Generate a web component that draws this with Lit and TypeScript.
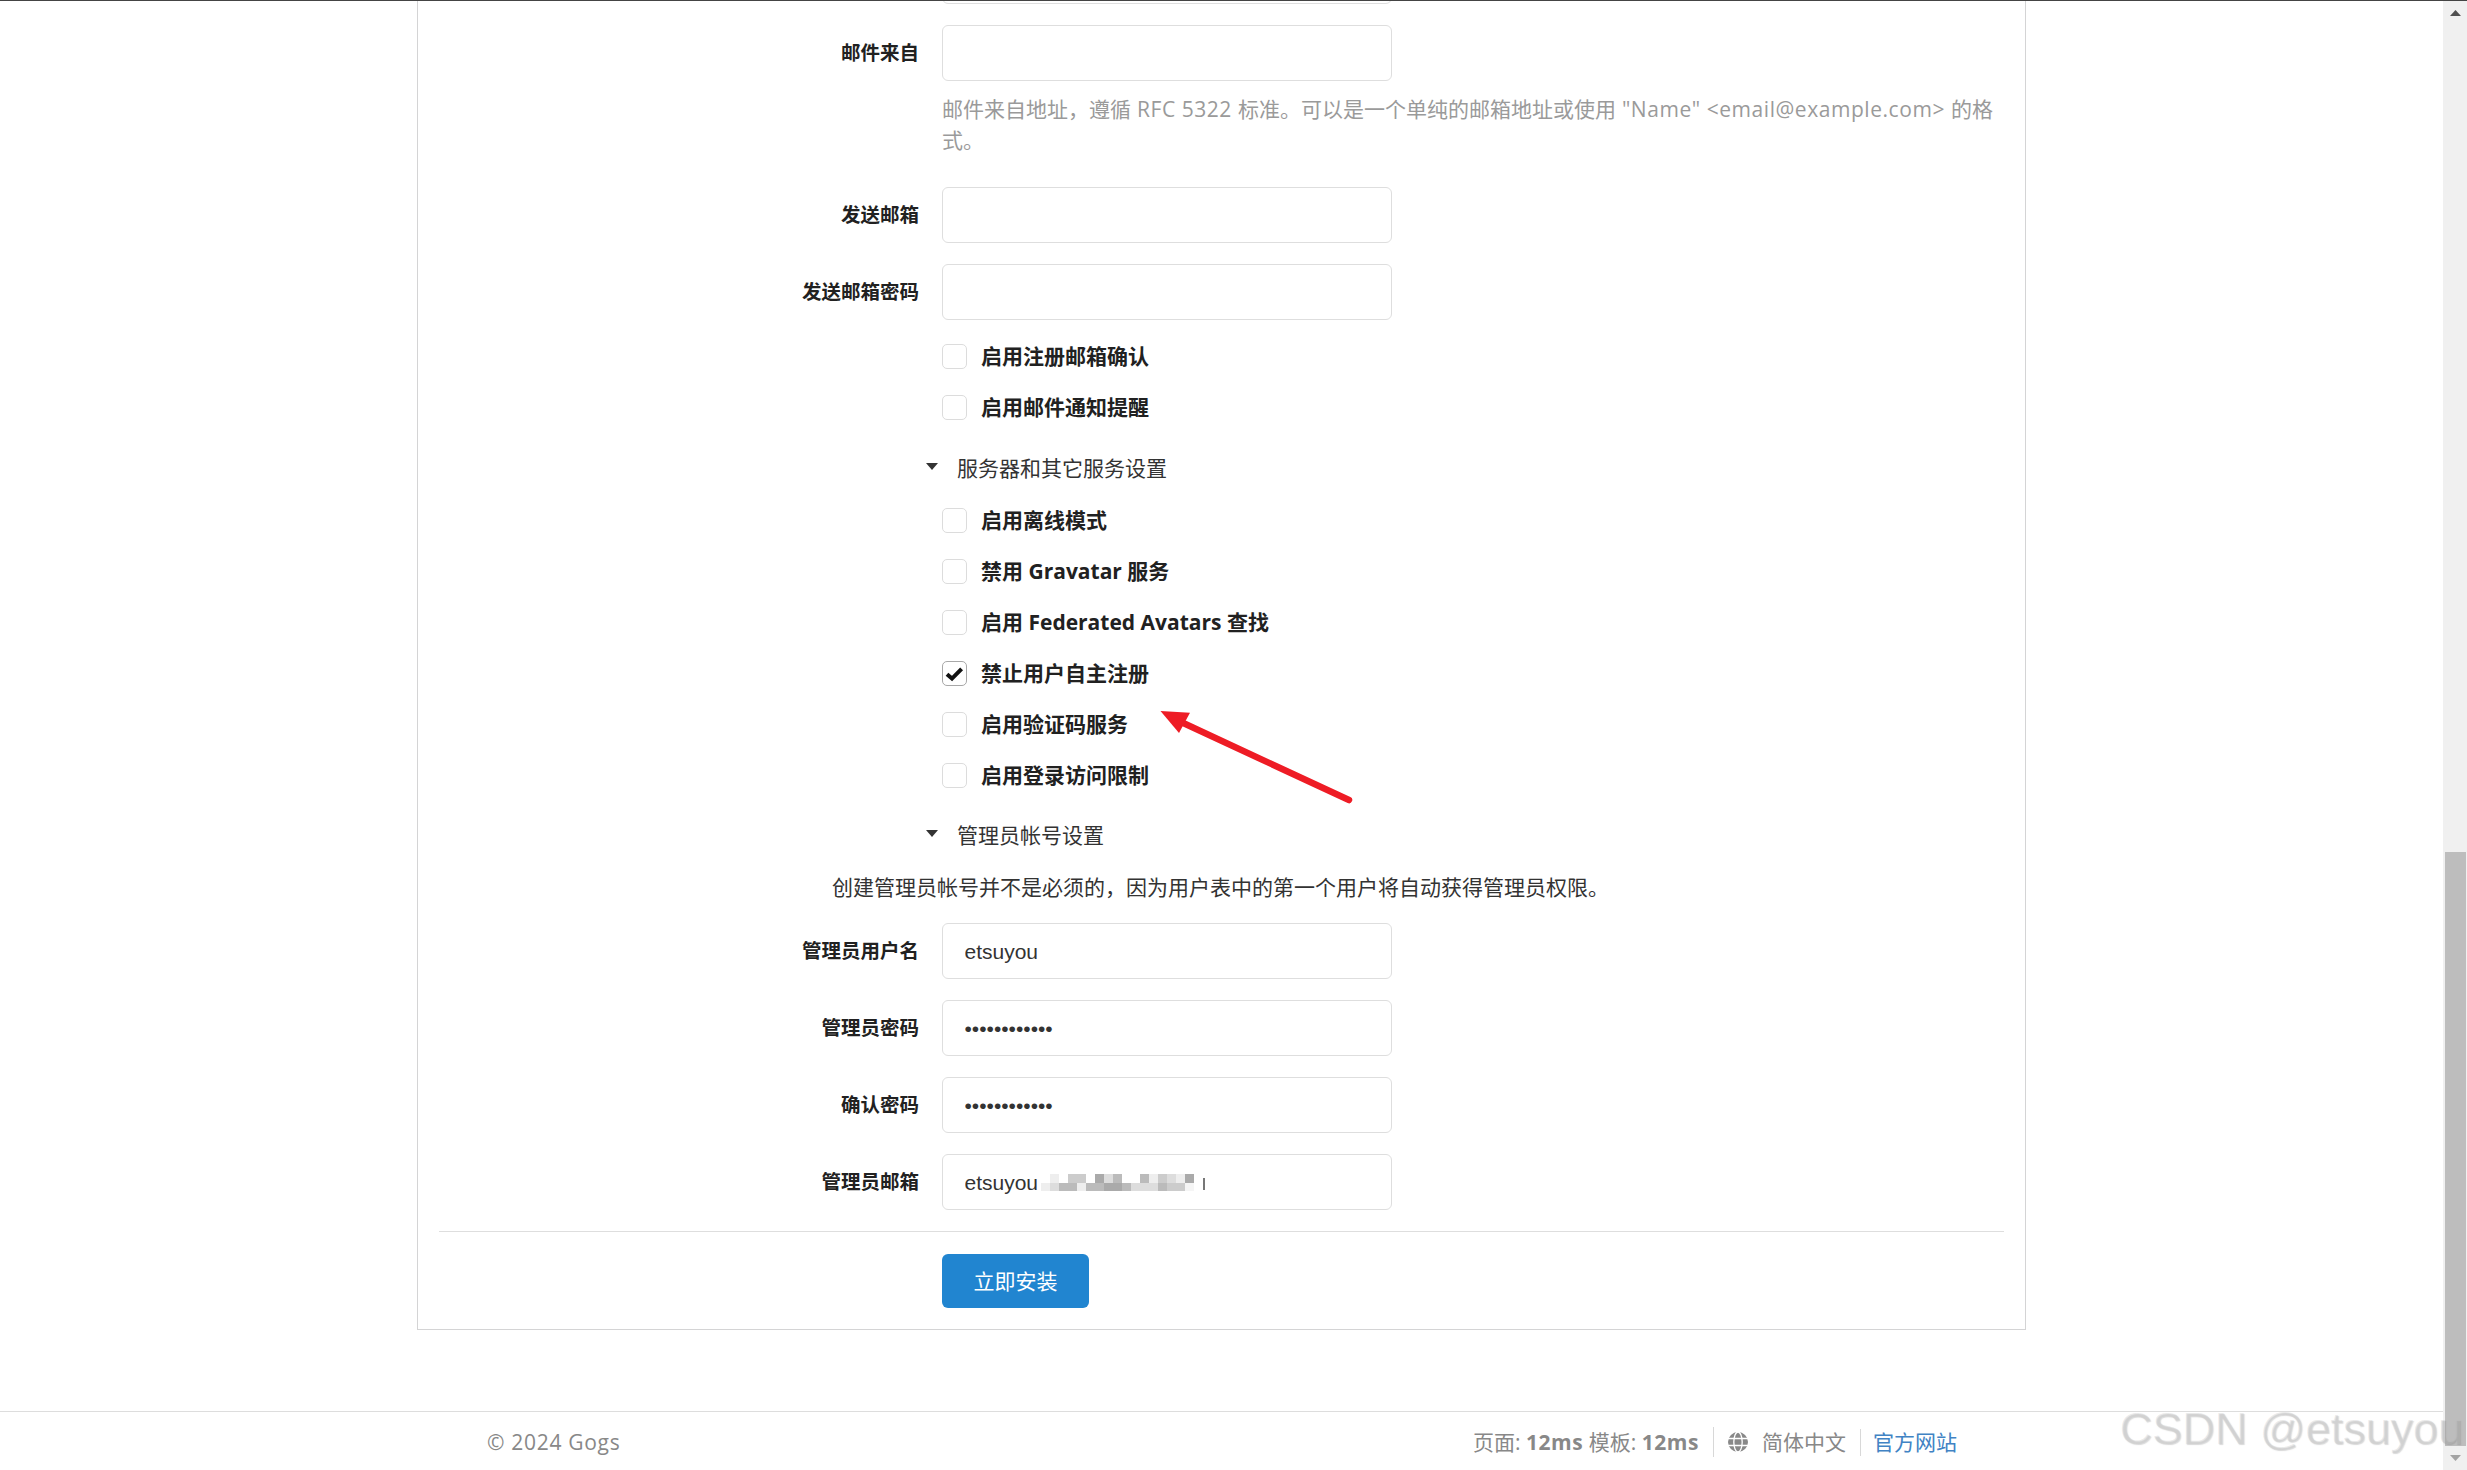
import { LitElement, html, css, svg } from "lit";
import { customElement } from "lit/decorators.js";

const MOSAIC: string[][] = [
  ["#fff","#eee","#fff","#ccc","#ccc","#fff","#aaa","#ddd","#bbb","#fff","#fff","#bbb","#eee","#ccc","#ddd","#eee","#aaa"],
  ["#eee","#ddd","#bbb","#bbb","#eee","#bbb","#bbb","#aaa","#aaa","#bbb","#ddd","#ddd","#ddd","#bbb","#ccc","#ccc","#f5f5f5"],
];

@customElement("app-root")
export class AppRoot extends LitElement {
  static styles = css`
    :host {
      display: block;
      position: relative;
      width: 2467px;
      height: 1470px;
      overflow: hidden;
      background: #fff;
      color: #212121;
      font-family: "Open Sans", "Noto Sans CJK SC", sans-serif;
      font-size: 21px;
      line-height: 30px;
    }
    .lt { letter-spacing: 0.55px; }
    .copy { letter-spacing: 0.7px; }
    .topline { height: 1px; background: #444; }
    .shell { display: flex; height: 1469px; }
    .main {
      flex: 1;
      min-width: 0;
      display: flex;
      flex-direction: column;
      justify-content: flex-end;
      overflow: hidden;
    }
    .card {
      flex: none;
      box-sizing: border-box;
      width: 1609px;
      margin: 0 0 81px 417px;
      padding: 0 21px 21px 21px;
      border: 1px solid #d4d4d5;
      border-top: none;
    }
    .field {
      display: grid;
      grid-template-columns: 480px 450px;
      column-gap: 23px;
      align-items: center;
      margin-top: 21px;
    }
    .field label {
      text-align: right;
      font-size: 19.5px;
      font-weight: 700;
      color: #212121;
    }
    .field input {
      box-sizing: border-box;
      display: block;
      width: 450px;
      height: 56px;
      padding: 1px 21.5px 0;
      border: 1px solid #dedede;
      border-radius: 6px;
      background: #fff;
      outline: none;
      color: #333;
      font-family: "Liberation Sans", sans-serif;
      font-size: 21px;
    }
    .wrap { position: relative; display: block; }
    .mosaic {
      position: absolute;
      left: 99px;
      top: 20px;
      display: grid;
      grid-template-columns: repeat(17, 9px);
      grid-auto-rows: 8.5px;
    }
    .sliver {
      position: absolute;
      left: 261px;
      top: 24px;
      width: 1.5px;
      height: 12px;
      background: #777;
    }
    .hint {
      margin: 13px 0 0 503px;
      white-space: nowrap;
      line-height: 31px;
      color: #9a9a9a;
    }
    .hint + .field { margin-top: 31px; }
    .check {
      display: flex;
      align-items: center;
      gap: 14px;
      height: 30px;
      margin: 21px 0 0 503px;
      font-weight: 700;
      font-size: 21px;
      color: #212121;
    }
    .box {
      box-sizing: border-box;
      flex: none;
      width: 25px;
      height: 25px;
      border: 1px solid #dcdcdc;
      border-radius: 5px;
      background: #fff;
      display: flex;
    }
    .box.on { border-color: #a8a8a8; }
    .section {
      display: flex;
      align-items: center;
      gap: 19px;
      height: 30px;
      margin: 30px 0 0 487px;
      padding-bottom: 1px;
      color: #333;
    }
    .section.first { margin-top: 31px; }
    .section svg { margin-top: -4px; }
    .intro { margin: 21px 0 0 393px; color: #333; }
    .divider { height: 1px; background: #dedede; margin-top: 21px; }
    .submit {
      display: block;
      box-sizing: border-box;
      width: 147px;
      height: 54px;
      margin: 22px 0 0 503px;
      border: none;
      border-radius: 6px;
      background: #2185d0;
      color: #fff;
      font: inherit;
    }
    footer {
      flex: none;
      box-sizing: border-box;
      height: 59px;
      padding: 2px 486px 0 487px;
      border-top: 1px solid #ddd;
      display: flex;
      align-items: center;
      justify-content: space-between;
      color: #888;
    }
    .meta { display: flex; align-items: center; }
    .meta b { font-weight: 700; }
    .cell { display: flex; align-items: center; gap: 14px; height: 30px; padding: 0 14px; border-left: 1px solid #d8d8d8; }
    .cell.last { padding-right: 0; padding-left: 12px; height: 27px; }
    .stats { padding-right: 14px; }
    .link { color: #4183c4; }
    .scrollbar {
      flex: none;
      width: 24px;
      display: flex;
      flex-direction: column;
      background: #f0f0f0;
    }
    .arrow { flex: none; height: 24px; display: flex; align-items: center; justify-content: center; }
    .track { flex: 1; display: flex; flex-direction: column; justify-content: flex-end; }
    .thumb { height: 594px; margin: 0 1px 0 2px; background: #bdbdbd; }
    .mark {
      position: absolute;
      right: 4px;
      bottom: 15px;
      font-family: "Liberation Sans", sans-serif;
      font-size: 45px;
      line-height: 52px;
      white-space: nowrap;
      color: rgba(190, 190, 190, 0.3);
      text-shadow: 1px 1px 1px rgba(120, 120, 120, 0.28);
    }
    .redarrow { position: absolute; left: 1150px; top: 700px; }
  `;

  private field(label: string, value = "", type = "text") {
    return html`<div class="field"><label>${label}</label><input type=${type} .value=${value} /></div>`;
  }

  private check(label: string, on = false) {
    return html`<div class="check">
      <span class="box ${on ? "on" : ""}">
        ${on
          ? html`<svg width="23" height="23" viewBox="0 0 23 23"><path d="M4 12.2 L9 16.6 L18.6 6.8" fill="none" stroke="#111" stroke-width="4"/></svg>`
          : ""}
      </span>
      <span>${label}</span>
    </div>`;
  }

  private section(label: string, first = false) {
    return html`<div class="section ${first ? "first" : ""}">
      <svg width="12" height="7" viewBox="0 0 12 7"><path d="M0 0 H12 L6 7 Z" fill="#333"/></svg>
      <span>${label}</span>
    </div>`;
  }

  private globe() {
    return svg`<svg width="20" height="20" viewBox="0 0 20 20">
      <circle cx="10" cy="10" r="10" fill="#888"/>
      <g fill="none" stroke="#fff" stroke-width="1.3">
        <path d="M0 6.5 H20 M0 13.5 H20"/>
        <ellipse cx="10" cy="10" rx="4.2" ry="10"/>
      </g>
    </svg>`;
  }

  render() {
    return html`
      <div class="topline"></div>
      <div class="shell">
        <div class="main">
          <div class="card">
            ${this.field("")}
            ${this.field("邮件来自")}
            <div class="hint">邮件来自地址，遵循<span class="lt"> RFC 5322 </span>标准。可以是一个单纯的邮箱地址或使用<span class="lt"> "Name" &lt;email@example.com&gt; </span>的格<br />式。</div>
            ${this.field("发送邮箱")}
            ${this.field("发送邮箱密码", "", "password")}
            ${this.check("启用注册邮箱确认")}
            ${this.check("启用邮件通知提醒")}
            ${this.section("服务器和其它服务设置", true)}
            ${this.check("启用离线模式")}
            ${this.check("禁用 Gravatar 服务")}
            ${this.check("启用 Federated Avatars 查找")}
            ${this.check("禁止用户自主注册", true)}
            ${this.check("启用验证码服务")}
            ${this.check("启用登录访问限制")}
            ${this.section("管理员帐号设置")}
            <div class="intro">创建管理员帐号并不是必须的，因为用户表中的第一个用户将自动获得管理员权限。</div>
            ${this.field("管理员用户名", "etsuyou")}
            ${this.field("管理员密码", "xxxxxxxxxxxx", "password")}
            ${this.field("确认密码", "xxxxxxxxxxxx", "password")}
            <div class="field">
              <label>管理员邮箱</label>
              <span class="wrap">
                <input type="text" .value=${"etsuyou"} />
                <span class="mosaic">
                  ${MOSAIC.flat().map((c) => html`<i style="background:${c}"></i>`)}
                </span>
                <span class="sliver"></span>
              </span>
            </div>
            <div class="divider"></div>
            <button class="submit">立即安装</button>
          </div>
          <footer>
            <span class="copy">© 2024 Gogs</span>
            <div class="meta">
              <span class="stats">页面: <b class="lt">12ms</b> 模板: <b class="lt">12ms</b></span>
              <span class="cell">${this.globe()}<span>简体中文</span></span>
              <span class="cell last link">官方网站</span>
            </div>
          </footer>
        </div>
        <div class="scrollbar">
          <div class="arrow"><svg width="11" height="6" viewBox="0 0 11 6"><path d="M5.5 0 L11 6 H0 Z" fill="#505050"/></svg></div>
          <div class="track"><div class="thumb"></div></div>
          <div class="arrow"><svg width="11" height="6" viewBox="0 0 11 6"><path d="M0 0 H11 L5.5 6 Z" fill="#a3a3a3"/></svg></div>
        </div>
      </div>
      <div class="mark">CSDN @etsuyou</div>
      <svg class="redarrow" width="210" height="112" viewBox="0 0 210 112">
        <path d="M10.5 11 L40 12.7 L29 33 Z" fill="#ee1c25"/>
        <path d="M30 21.5 L199 100" fill="none" stroke="#ee1c25" stroke-width="6.5" stroke-linecap="round"/>
      </svg>
    `;
  }
}
